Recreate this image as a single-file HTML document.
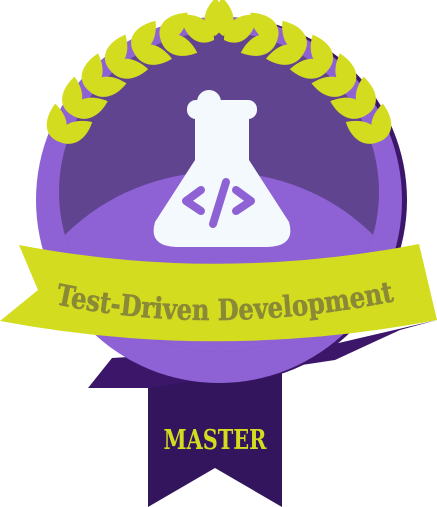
<!DOCTYPE html>
<html><head><style>html,body{margin:0;padding:0;background:#fff;width:437px;height:507px;overflow:hidden}svg{display:block}</style></head>
<body>
<svg width="437" height="507" viewBox="0 0 437 507" xmlns="http://www.w3.org/2000/svg">
<defs>
<path id="lf" d="M0,0 C12,-6 17,-20 6,-38 C-12,-24 -12,-8 0,0Z"/>
<g id="pair"><use href="#lf" transform="rotate(55)"/><use href="#lf" transform="rotate(120)"/></g>
<g id="pairR"><use href="#lf" transform="rotate(-55) scale(-1,1)"/><use href="#lf" transform="rotate(-120) scale(-1,1)"/></g>
</defs>
<path d="M148,350 L282,350 L282,507 L215,468 L148,507 Z" fill="#33155d"/>
<path d="M88,388 L112,358 L330,345 L437,320 L400,330 L335,360 L282,368 L148,388 Z" fill="#3c1669"/>
<circle cx="224" cy="200" r="183" fill="#3c1669"/>
<circle cx="219" cy="200" r="183" fill="#8e62d4"/>
<circle cx="219" cy="192" r="160" fill="#614490"/>
<clipPath id="ic"><circle cx="219" cy="192" r="160"/></clipPath>
<ellipse cx="219" cy="380" rx="215" ry="208" fill="#8e62d4" clip-path="url(#ic)"/>
<g fill="#d4dc1f">
<g transform="rotate(-70 219 200)"><use href="#pair" x="219" y="30"/></g>
<g transform="rotate(-60 219 200)"><use href="#pair" x="219" y="30"/></g>
<g transform="rotate(-50 219 200)"><use href="#pair" x="219" y="30"/></g>
<g transform="rotate(-40 219 200)"><use href="#pair" x="219" y="30"/></g>
<g transform="rotate(-30 219 200)"><use href="#pair" x="219" y="30"/></g>
<g transform="rotate(-20 219 200)"><use href="#pair" x="219" y="30"/></g>
<g transform="rotate(70 219 200)"><use href="#pairR" x="219" y="30"/></g>
<g transform="rotate(60 219 200)"><use href="#pairR" x="219" y="30"/></g>
<g transform="rotate(50 219 200)"><use href="#pairR" x="219" y="30"/></g>
<g transform="rotate(40 219 200)"><use href="#pairR" x="219" y="30"/></g>
<g transform="rotate(30 219 200)"><use href="#pairR" x="219" y="30"/></g>
<g transform="rotate(20 219 200)"><use href="#pairR" x="219" y="30"/></g>
<use href="#lf" transform="translate(215,36) rotate(-8)"/>
<use href="#lf" transform="translate(223,36) rotate(8) scale(-1,1)"/>
<use href="#lf" transform="translate(214,40) rotate(-62) scale(1.1)"/>
<use href="#lf" transform="translate(224,40) rotate(62) scale(-1.1,1.1)"/>
</g>
<g fill="#f3f9fd">
<circle cx="209" cy="102" r="12"/>
<rect x="187" y="100" width="70" height="19" rx="9"/>
<rect x="195" y="110" width="54" height="55"/>
<path d="M195,160 L249,160 L289,222 Q296,246 268,247 L176,247 Q148,246 155,222 Z"/>
</g>
<g stroke="#8e62d4" stroke-width="8" stroke-linecap="round" stroke-linejoin="round" fill="none">
<path d="M201,190 L186,201 L201,211"/>
<path d="M236,190 L251,201 L236,211"/>
<path d="M226,182 L213,224"/>
</g>
<path d="M19,245 Q218,283 419,244 L437,320 Q218,362 0,321 L38,290 Z" fill="#d4dc1f"/>
<path id="tp" d="M55,304 Q215,338 400,300" fill="none"/>
<text font-family="'DejaVu Serif','Liberation Serif',serif" font-weight="bold" font-size="29" fill="#8a8a36" stroke="#8a8a36" stroke-width="0.6"><textPath href="#tp" textLength="342" lengthAdjust="spacingAndGlyphs">Test-Driven Development</textPath></text>
<text x="215" y="449" text-anchor="middle" font-family="'DejaVu Serif','Liberation Serif',serif" font-weight="bold" font-size="27" fill="#d4dc1f" textLength="103" lengthAdjust="spacingAndGlyphs">MASTER</text>
</svg>
</body></html>
